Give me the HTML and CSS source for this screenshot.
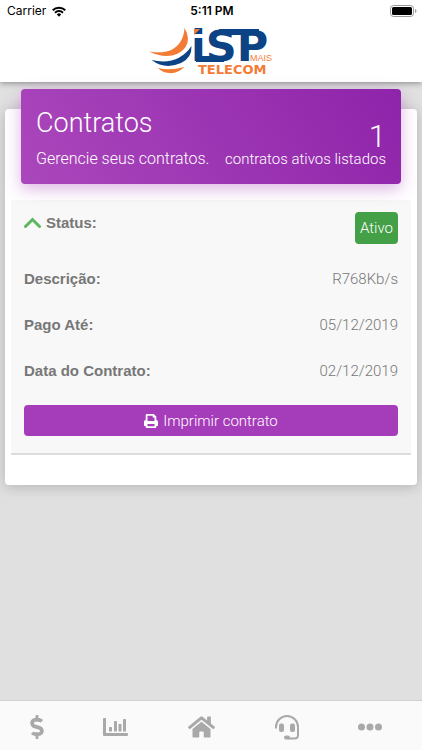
FILE: index.html
```html
<!DOCTYPE html>
<html lang="pt-BR">
<head>
<meta charset="utf-8">
<meta name="viewport" content="width=device-width, initial-scale=1">
<title>Contratos</title>
<link rel="stylesheet" href="styles.css">
</head>
<body>
<header class="top">
  <div class="status-bar">
    <span class="carrier">Carrier
      <svg width="14" height="11" viewBox="0 0 14 11" aria-hidden="true"><g fill="none" stroke="#000" stroke-width="2"><path d="M.7 4.2a9 9 0 0 1 12.6 0"/><path d="M3 6.7a5.7 5.7 0 0 1 8 0"/></g><path d="M4.8 8.4a3.2 3.2 0 0 1 4.4 0L7 10.7z"/></svg>
    </span>
    <span class="clock">5:11 PM</span>
    <span class="battery"><svg width="27" height="12" viewBox="0 0 27 12" aria-hidden="true"><rect x=".5" y=".5" width="23" height="11" rx="3" fill="#fff" stroke="#999"/><rect x="2" y="2" width="20" height="8" rx="1.5"/><path d="M25 4v4q1.5-.6 1.5-2T25 4z" fill="#999"/></svg></span>
  </div>
  <svg class="logo" width="124" height="50" viewBox="0 0 124 50" role="img" aria-label="ISP Mais Telecom">
    <text class="logo-main" x="42" y="34">iSP</text>
    <path fill="#0b4385" d="M70 2h40v6H70zM47 29h28v6H47z"/>
    <g fill="#f47b35">
      <path d="M35.500 1Q42 12 36.500 20C29 30.500 14 31.500 0 24.500C15 27 25 24 31 15.500Q35 9.500 35.500 1z"/>
      <path d="M9 41Q20 44 35.500 40Q28 47 20 46Q13 45.500 9 41z"/>
      <path d="M45 2h6l-6 6z"/>
    </g>
    <path fill="#0b4385" d="M2.500 33Q29 39 42.500 19Q43 31 32 36Q16 43 2.500 33z"/>
    <text class="logo-mais" x="101" y="34">MAIS</text>
    <text class="logo-telecom" x="49" y="47">TELECOM</text>
  </svg>
</header>

<main class="content">
  <section class="card">
    <div class="banner">
      <div>
        <h1>Contratos</h1>
        <p>Gerencie seus contratos.</p>
      </div>
      <div class="summary">
        <strong>1</strong>
        <p>contratos ativos listados</p>
      </div>
    </div>
    <div class="contract">
      <dl>
        <div class="row status">
          <dt><svg width="17" height="11" viewBox="0 0 17 11" aria-hidden="true"><path d="M1.500 9.500l7-7 7 7" fill="none" stroke="#5cb860" stroke-width="3" stroke-linecap="round"/></svg>Status:</dt>
          <dd class="badge">Ativo</dd>
        </div>
        <div class="row"><dt>Descrição:</dt><dd>R768Kb/s</dd></div>
        <div class="row"><dt>Pago Até:</dt><dd>05/12/2019</dd></div>
        <div class="row"><dt>Data do Contrato:</dt><dd>02/12/2019</dd></div>
      </dl>
      <button class="print" type="button">
        <svg width="14" height="14" viewBox="0 0 14 14" aria-hidden="true"><path fill="#fff" fill-rule="evenodd" d="M1.700 6V1Q1.700 0 2.700 0h7L12.300 2.500V6Q14 6.200 14 8v3.500q0 .5-.5.500H12.300v1q0 1-1 1H2.700q-1 0-1-1v-1H.5q-.5 0-.5-.5V8Q0 6.200 1.700 6zM3.500 1.800V7h7V3.500H8.700V1.800zM3.500 10v2.200h7V10z"/></svg>
        <span>Imprimir contrato</span>
      </button>
    </div>
  </section>
</main>

<nav class="tabs" aria-label="Principal">
  <a href="#financeiro" aria-label="Financeiro"><svg width="14" height="24" viewBox="0 0 288 512"><path d="M209 233l-108-31c-12-4-21-15-21-28 0-16 13-29 29-29h67c12 0 24 4 34 11 6 4 14 3 19-2l35-34c7-7 6-18-2-24-24-19-54-30-86-31V16c0-9-7-16-16-16h-32c-9 0-16 7-16 16v49h-3C46 65-6 120 1 185c4 46 40 84 84 97l103 30c12 4 20 15 20 28 0 16-13 29-29 29h-67c-12 0-24-4-34-11-6-4-14-3-19 2l-35 34c-7 7-6 18 2 24 24 19 54 30 86 31v47c0 9 7 16 16 16h32c9 0 16-7 16-16v-48c47-1 90-29 106-73 22-62-15-125-73-142z"/></svg></a>
  <a href="#consumo" aria-label="Consumo"><svg width="25" height="20" viewBox="0 0 25 20"><path d="M1 1h1.500q.5 0 .5.500V16h21q1 0 1 1v1q0 1-1 1H1q-1 0-1-1V2Q0 1 1 1z"/><rect x="6" y="10" width="3" height="4.500" rx=".6"/><rect x="11" y="4" width="3" height="10.500" rx=".6"/><rect x="15.500" y="7" width="3" height="7.500" rx=".6"/><rect x="20" y="2" width="3" height="12.500" rx=".6"/></svg></a>
  <a href="#inicio" aria-label="Início"><svg width="27" height="24" viewBox="0 0 576 512"><path d="M280 148L96 300v164c0 9 7 16 16 16h112c9 0 16-7 16-16v-96c0-9 7-16 16-16h64c9 0 16 7 16 16v96c0 9 7 16 16 16h112c9 0 16-7 16-16V300L296 148c-5-4-11-4-16 0zM572 251l-84-69V44c0-7-5-12-12-12h-56c-7 0-12 5-12 12v73l-90-74c-17-14-43-14-61 0L4 251c-5 4-5 12-1 17l26 31c4 5 11 5 16 1L280 107c5-4 11-4 16 0l235 193c5 4 12 4 17-1l25-31c5-5 4-13-1-17z"/></svg></a>
  <a href="#suporte" aria-label="Suporte"><svg width="24" height="25" viewBox="0 0 24 25"><path d="M1 13.500V12a11 11 0 0 1 22 0v8q0 3.500-3.500 3.500H13" fill="none" stroke="#a9a9a9" stroke-width="2"/><rect x="4" y="8.500" width="5" height="8.500" rx="2"/><rect x="15" y="8.500" width="5" height="8.500" rx="2"/><rect x="9" y="20.500" width="6" height="4" rx="2"/></svg></a>
  <a href="#mais" aria-label="Mais"><svg width="24" height="8" viewBox="0 0 24 8"><circle cx="3.500" cy="4" r="3.500"/><circle cx="12" cy="4" r="3.500"/><circle cx="20.500" cy="4" r="3.500"/></svg></a>
</nav>
</body>
</html>
```
FILE: styles.css
```css
* { box-sizing: border-box; }

body {
  margin: 0;
  min-height: 100vh;
  display: flex;
  flex-direction: column;
  background: #e0e0e0;
  color: #777;
  font: 300 15px/20px Roboto, "Liberation Sans", sans-serif;
}

h1, p, dl, dt, dd { margin: 0; }

.top {
  display: flex;
  flex-direction: column;
  align-items: center;
  padding-bottom: 5px;
  background: #fff;
  box-shadow: 0 1px 6px rgba(0, 0, 0, .4);
}

.status-bar {
  align-self: stretch;
  display: grid;
  grid-template-columns: 1fr auto 1fr;
  align-items: center;
  height: 22px;
  padding: 0 5px 0 7px;
  color: #000;
  font: 400 12px/22px Inter, sans-serif;
}

.carrier { display: flex; align-items: center; gap: 6px; }
.clock { font-weight: 600; }
.battery { display: flex; justify-content: flex-end; }

.logo { margin-top: 5px; overflow: visible; }
.logo-main { fill: #0b4385; font: 700 43px "DejaVu Sans", sans-serif; }
.logo-mais { fill: #f47b35; font: 400 9px "Liberation Sans", sans-serif; }
.logo-telecom { fill: #f47b35; font: 700 13px "DejaVu Sans", sans-serif; }

.content { flex: 1; padding: 27px 5px 0; }

.card {
  padding: 0 6px 30px;
  border-radius: 4px;
  background: #fff;
  box-shadow: 0 2px 14px rgba(0, 0, 0, .2);
}

.banner {
  position: relative;
  top: -20px;
  display: flex;
  justify-content: space-between;
  align-items: flex-end;
  height: 95px;
  margin: 0 10px -4px;
  padding: 15px;
  border-radius: 4px;
  background: linear-gradient(60deg, #ab47bc, #8e24aa);
  box-shadow: 0 5px 16px rgba(156, 39, 176, .35);
  color: #fff;
}

.banner h1, .banner strong {
  display: block;
  font-size: 27px;
  font-weight: 300;
  line-height: 32px;
}

.banner h1 { margin-bottom: 10px; }
.banner h1 + p { font-size: 16px; }
.banner strong { font-size: 31px; line-height: 24px; }
.summary { text-align: right; }

.contract {
  padding: 12px 13px 17px;
  border-bottom: 2px solid #ddd;
  background: #f8f8f8;
}

.row {
  display: flex;
  justify-content: space-between;
  align-items: center;
  height: 46px;
}

.row.status { align-items: flex-start; height: 44px; }
.row dt { font: 700 15px/22px "Liberation Sans", sans-serif; }
.status dt svg { margin-right: 5px; }

.badge {
  padding: 6px 5px;
  border-radius: 4px;
  background: #43a047;
  color: #fff;
}

.print {
  display: flex;
  justify-content: center;
  align-items: center;
  gap: 5px;
  width: 100%;
  height: 31px;
  margin-top: 11px;
  padding: 0;
  border: 0;
  border-radius: 4px;
  background: #a53cba;
  color: #fff;
  font: inherit;
}

.tabs {
  display: flex;
  justify-content: space-around;
  align-items: center;
  height: 50px;
  padding: 3px 10px 0 0;
  border-top: 1px solid #d0d0d0;
  background: #fafafa;
}

.tabs a { display: flex; }
.tabs svg { fill: #a9a9a9; }
```
